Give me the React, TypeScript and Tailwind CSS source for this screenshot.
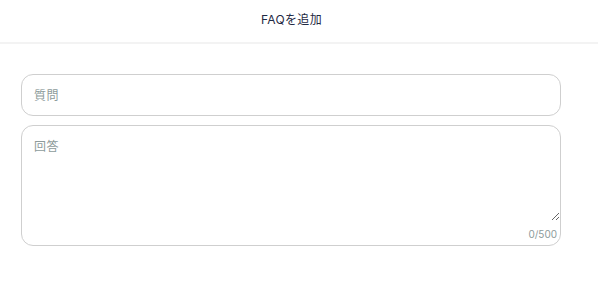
export default function App() {
  return (
    <div className="w-[598px] h-[296px] bg-white font-[Inter,'Noto_Sans_CJK_JP',sans-serif]">
      <header className="h-[44px] flex items-center justify-center pr-[15px] border-b-2 border-[#f3f3f3]">
        <h1 className="text-[12px] text-[#1f2a44] tracking-[0.03em] leading-none -mt-[3px]">FAQを追加</h1>
      </header>
      <main className="pl-[21px] pt-[30px]">
        <div className="w-[540px] flex flex-col gap-[9px]">
          <input
            type="text"
            placeholder="質問"
            className="h-[42px] w-full rounded-[12px] border border-[#cfcfcf] px-3 text-[12px] tracking-[0.04em] outline-none placeholder:text-[#8d9b9b]"
          />
          <div className="h-[121px] w-full rounded-[12px] border border-[#cfcfcf] flex flex-col">
            <textarea
              placeholder="回答"
              className="h-[95px] w-full px-3 pt-[12px] text-[12px] tracking-[0.04em] outline-none resize-y placeholder:text-[#8d9b9b] rounded-t-[12px]"
            />
            <div className="text-right text-[10px] text-[#8d9b9b] pr-[3px] leading-none mt-[8px]">0/500</div>
          </div>
        </div>
      </main>
    </div>
  )
}
